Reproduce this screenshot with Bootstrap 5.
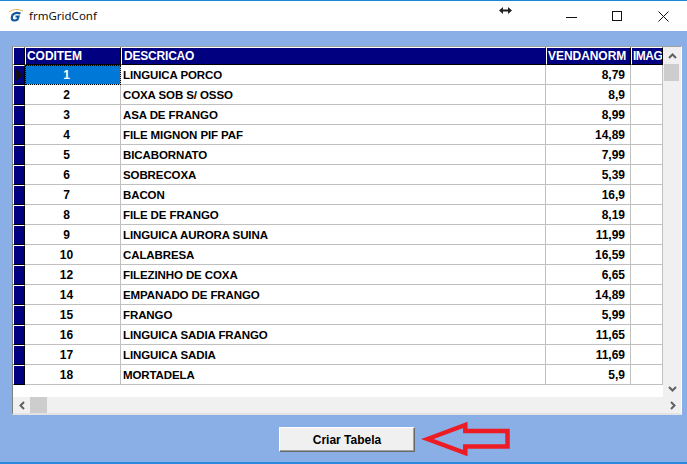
<!DOCTYPE html>
<html lang="pt">
<head>
<meta charset="utf-8">
<title>frmGridConf</title>
<link href="https://cdn.jsdelivr.net/npm/bootstrap@5.3.0/dist/css/bootstrap.min.css" rel="stylesheet">
<style>
html,body{height:464px;margin:0;overflow:hidden;background:#8aaee6}
.win-frame{height:464px;width:687px;display:flex;flex-direction:column;background:#8aaee6;border-top:1px solid #1a86d8;border-bottom:2px solid #2a8ae0}
.title-strip{height:30px;background:#fff;flex:none;padding:0 1px 0 8px;font:11.5px "Noto Sans",sans-serif;color:#111;position:relative}
.title-name{margin-left:5px;margin-top:-1px}
.cursor-mark{position:absolute;left:499px;top:5px}
.win-btn{width:46px;height:30px;display:flex;align-items:center;justify-content:center}
.client-zone{flex:1;padding:15px 5px 0 12px;min-height:0}
.grid-frame{width:670px;height:369px;background:#f0f0f0;border-top:1px solid #a0a0a0;border-left:1px solid #808080;border-right:1px solid #fff;border-bottom:2px solid #e3e3e3;display:flex;flex-direction:column}
.grid-top{display:flex;height:351px}
.grid-pane{width:650px;background:#fff;overflow:hidden;flex:none}
.data-grid{border-collapse:separate;border-spacing:0;table-layout:fixed;width:650px;font:bold 11.5px "Liberation Sans",sans-serif;letter-spacing:-.1px;color:#000}
.data-grid col.c0{width:12px}.data-grid col.c1{width:96px}.data-grid col.c2{width:425px}.data-grid col.c3{width:85px}.data-grid col.c4{width:32px}
.data-grid th{height:18px;background:#000080;color:#fff;padding:0 0 0 1px;border:1px solid #fff;border-right:1px solid #000;border-bottom:1px solid #000;white-space:nowrap;overflow:hidden;font-size:12px;font-weight:bold;letter-spacing:-.05px;line-height:14px}
.data-grid th.img-head{letter-spacing:-.5px}
.data-grid th.desc-head{padding-left:2px;letter-spacing:-.2px}
.data-grid td{height:20px;padding:0 2px;border-right:1px solid #c0c0c0;border-bottom:1px solid #c0c0c0;white-space:nowrap;overflow:hidden;line-height:18px;vertical-align:middle}
.data-grid td.ind{background:#000080;border:1px solid #fff;border-right:1px solid #000;border-bottom:1px solid #000;padding:0;position:relative}
.data-grid td.cod{text-align:center;padding-right:14px;font-size:12px;letter-spacing:0}
.data-grid td.val{text-align:right;padding-right:5px;font-size:12px;letter-spacing:0}
.data-grid td.sel{background:#0078d7;color:#fff;outline:1px dotted #000;outline-offset:-1px}
.ptr{position:absolute;left:2px;top:3px;width:0;height:0;border-left:7px solid #111;border-top:6px solid transparent;border-bottom:6px solid transparent}
.vbar{width:18px;flex:none;display:flex;flex-direction:column;background:#f0f0f0}
.sb-btn{height:17px;display:flex;align-items:center;justify-content:center;flex:none}
.v-thumb{height:17px;background:#cdcdcd;width:15px;margin-left:1px}
.v-fill{flex:1}
.hbar{height:16px;display:flex;background:#f0f0f0;align-items:stretch}
.hb-btn{width:17px;display:flex;align-items:center;justify-content:center;flex:none}
.h-thumb{width:17px;background:#cdcdcd;flex:none}
.h-fill{flex:1}
.action-row{position:relative;height:47px;margin-left:-12px}
.make-btn{position:absolute;left:279px;top:12px;width:136px;height:25px;background:#f0f0f0;border:1px solid;border-color:#fff #696969 #696969 #fff;box-shadow:inset -1px -1px 0 #a0a0a0;border-radius:0;padding:0;font:bold 12px "Liberation Sans",sans-serif;color:#000}
.red-arrow{position:absolute;left:418px;top:3px}
</style>
</head>
<body>
<div class="win-frame">
  <div class="title-strip d-flex align-items-center">
    <svg width="16" height="14" viewBox="0 0 16 14" aria-hidden="true"><path d="M1 3Q7 -1.500 15 2" fill="none" stroke="#e8b04a" stroke-width="1"/><path d="M12.500 4.500Q7 2.500 4.500 6Q2.500 11 6 11.500Q8.500 11.500 9.500 10.500L10.500 7.500H7.500" fill="none" stroke="#12569e" stroke-width="2.200"/></svg>
    <span class="title-name">frmGridConf</span>
    <svg class="cursor-mark" width="13" height="9" viewBox="0 0 13 9" aria-hidden="true"><path d="M0 4.500L4 1V3.500H9V1L13 4.500L9 8V5.500H4V8Z" fill="#222"/></svg>
    <div class="ms-auto d-flex">
      <div class="win-btn"><svg width="11" height="11" aria-hidden="true"><path d="M0 6.500H11" stroke="#111"/></svg></div>
      <div class="win-btn"><svg width="11" height="11" aria-hidden="true"><rect x=".5" y=".5" width="9" height="9" fill="none" stroke="#111"/></svg></div>
      <div class="win-btn"><svg width="11" height="11" aria-hidden="true"><path d="M.5 .5L10.500 10.500M10.500 .5L.5 10.500" stroke="#111"/></svg></div>
    </div>
  </div>
  <div class="client-zone">
    <div class="grid-frame">
      <div class="grid-top">
        <div class="grid-pane">
          <table class="data-grid">
            <colgroup><col class="c0"><col class="c1"><col class="c2"><col class="c3"><col class="c4"></colgroup>
            <thead><tr><th></th><th>CODITEM</th><th class="desc-head">DESCRICAO</th><th>VENDANORM</th><th class="img-head">IMAG</th></tr></thead>
            <tbody>
              <tr><td class="ind"><span class="ptr"></span></td><td class="cod sel">1</td><td>LINGUICA PORCO</td><td class="val">8,79</td><td></td></tr>
              <tr><td class="ind"></td><td class="cod">2</td><td>COXA SOB S/ OSSO</td><td class="val">8,9</td><td></td></tr>
              <tr><td class="ind"></td><td class="cod">3</td><td>ASA DE FRANGO</td><td class="val">8,99</td><td></td></tr>
              <tr><td class="ind"></td><td class="cod">4</td><td>FILE MIGNON PIF PAF</td><td class="val">14,89</td><td></td></tr>
              <tr><td class="ind"></td><td class="cod">5</td><td>BICABORNATO</td><td class="val">7,99</td><td></td></tr>
              <tr><td class="ind"></td><td class="cod">6</td><td>SOBRECOXA</td><td class="val">5,39</td><td></td></tr>
              <tr><td class="ind"></td><td class="cod">7</td><td>BACON</td><td class="val">16,9</td><td></td></tr>
              <tr><td class="ind"></td><td class="cod">8</td><td>FILE DE FRANGO</td><td class="val">8,19</td><td></td></tr>
              <tr><td class="ind"></td><td class="cod">9</td><td>LINGUICA AURORA SUINA</td><td class="val">11,99</td><td></td></tr>
              <tr><td class="ind"></td><td class="cod">10</td><td>CALABRESA</td><td class="val">16,59</td><td></td></tr>
              <tr><td class="ind"></td><td class="cod">12</td><td>FILEZINHO DE COXA</td><td class="val">6,65</td><td></td></tr>
              <tr><td class="ind"></td><td class="cod">14</td><td>EMPANADO DE FRANGO</td><td class="val">14,89</td><td></td></tr>
              <tr><td class="ind"></td><td class="cod">15</td><td>FRANGO</td><td class="val">5,99</td><td></td></tr>
              <tr><td class="ind"></td><td class="cod">16</td><td>LINGUICA SADIA FRANGO</td><td class="val">11,65</td><td></td></tr>
              <tr><td class="ind"></td><td class="cod">17</td><td>LINGUICA SADIA</td><td class="val">11,69</td><td></td></tr>
              <tr><td class="ind"></td><td class="cod">18</td><td>MORTADELA</td><td class="val">5,9</td><td></td></tr>
            </tbody>
          </table>
        </div>
        <div class="vbar">
          <div class="sb-btn"><svg width="9" height="6" aria-hidden="true"><path d="M1 5L4.500 1.500L8 5" fill="none" stroke="#606060" stroke-width="2"/></svg></div>
          <div class="v-thumb"></div>
          <div class="v-fill"></div>
          <div class="sb-btn"><svg width="9" height="6" aria-hidden="true"><path d="M1 1L4.500 4.500L8 1" fill="none" stroke="#606060" stroke-width="2"/></svg></div>
        </div>
      </div>
      <div class="hbar">
        <div class="hb-btn"><svg width="6" height="9" aria-hidden="true"><path d="M5 1L1.500 4.500L5 8" fill="none" stroke="#606060" stroke-width="2"/></svg></div>
        <div class="h-thumb"></div>
        <div class="h-fill"></div>
        <div class="hb-btn"><svg width="6" height="9" aria-hidden="true"><path d="M1 1L4.500 4.500L1 8" fill="none" stroke="#606060" stroke-width="2"/></svg></div>
      </div>
    </div>
    <div class="action-row">
      <button type="button" class="btn make-btn">Criar Tabela</button>
      <svg class="red-arrow" width="96" height="40" viewBox="0 0 96 40" aria-hidden="true"><path d="M9.500 21L47.300 7V13H89.500V28.500H47.300V35Z" fill="none" stroke="#ed1c24" stroke-width="4.500"/></svg>
    </div>
  </div>
</div>
<script src="https://cdn.jsdelivr.net/npm/bootstrap@5.3.0/dist/js/bootstrap.bundle.min.js"></script>
</body>
</html>
